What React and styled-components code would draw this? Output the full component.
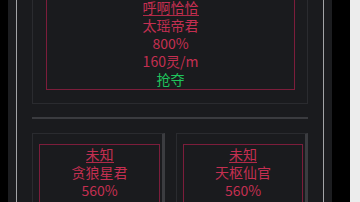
import React from "react";
import styled, { createGlobalStyle } from "styled-components";

const GlobalStyle = createGlobalStyle`
  html, body, #root {
    margin: 0;
    height: 100%;
  }
  body {
    background: #ececec;
    font-family: "Noto Sans CJK SC", "Noto Sans", sans-serif;
    overflow: hidden;
  }
`;

const Screen = styled.div`
  width: 350px;
  height: 100%;
  background: #000;
  overflow: hidden;
`;

const Frame = styled.div`
  width: 324px;
  height: 100%;
  margin-left: 8px;
  padding: 0 8px;
  box-sizing: border-box;
  background: #1c1d20;
`;

const Inner = styled.div`
  height: 100%;
  border-left: 1px solid #a3a4a7;
  border-right: 1px solid #a3a4a7;
  background: #1a1b1e;
  padding: 0 15px;
  overflow: hidden;
`;

const Scroll = styled.div`
  margin-top: -16px;
`;

const Section = styled.div`
  border: 1px solid #2a2b2f;
  padding: 12px 12px 13px 13px;
`;

const Divider = styled.div`
  height: 2px;
  background: #3a3b3f;
  margin: 13px 0 14px;
`;

const Grid = styled.div`
  display: grid;
  grid-template-columns: 133px 132px;
  column-gap: 11px;
`;

const Card = styled.div`
  border: 1px solid #2a2b2f;
  border-right: 3px solid #3b3c40;
  padding: 10px 2px 0 6px;
`;

const RedBox = styled.div`
  border: 1px solid #7c1d3b;
  padding: ${(p) => (p.$top ? "1px 0 1px" : "1px 0 0")};
  display: flex;
  flex-direction: column;
  align-items: center;
  color: #c42f51;
  font-size: 14px;
  line-height: 18px;
`;

const Title = styled.div`
  line-height: 15px;
  padding-top: 1px;
  border-bottom: 1px solid #b02a48;
`;

const Line = styled.div`
  color: ${(p) => (p.$green ? "#1fc45c" : "inherit")};
`;

const cards = [
  { owner: "未知", name: "贪狼星君", rate: "560%", income: "120灵/m" },
  { owner: "未知", name: "天枢仙官", rate: "560%", income: "120灵/m" },
];

export default function App() {
  return (
    <>
      <GlobalStyle />
      <Screen>
        <Frame>
          <Inner>
            <Scroll>
              <Section>
                <RedBox $top>
                  <Title>呼啊恰恰</Title>
                  <Line>太瑶帝君</Line>
                  <Line>800%</Line>
                  <Line>160灵/m</Line>
                  <Line $green>抢夺</Line>
                </RedBox>
              </Section>
              <Divider />
              <Grid>
                {cards.map((c, i) => (
                  <Card key={i}>
                    <RedBox>
                      <Title>{c.owner}</Title>
                      <Line>{c.name}</Line>
                      <Line>{c.rate}</Line>
                      <Line>{c.income}</Line>
                    </RedBox>
                  </Card>
                ))}
              </Grid>
            </Scroll>
          </Inner>
        </Frame>
      </Screen>
    </>
  );
}
